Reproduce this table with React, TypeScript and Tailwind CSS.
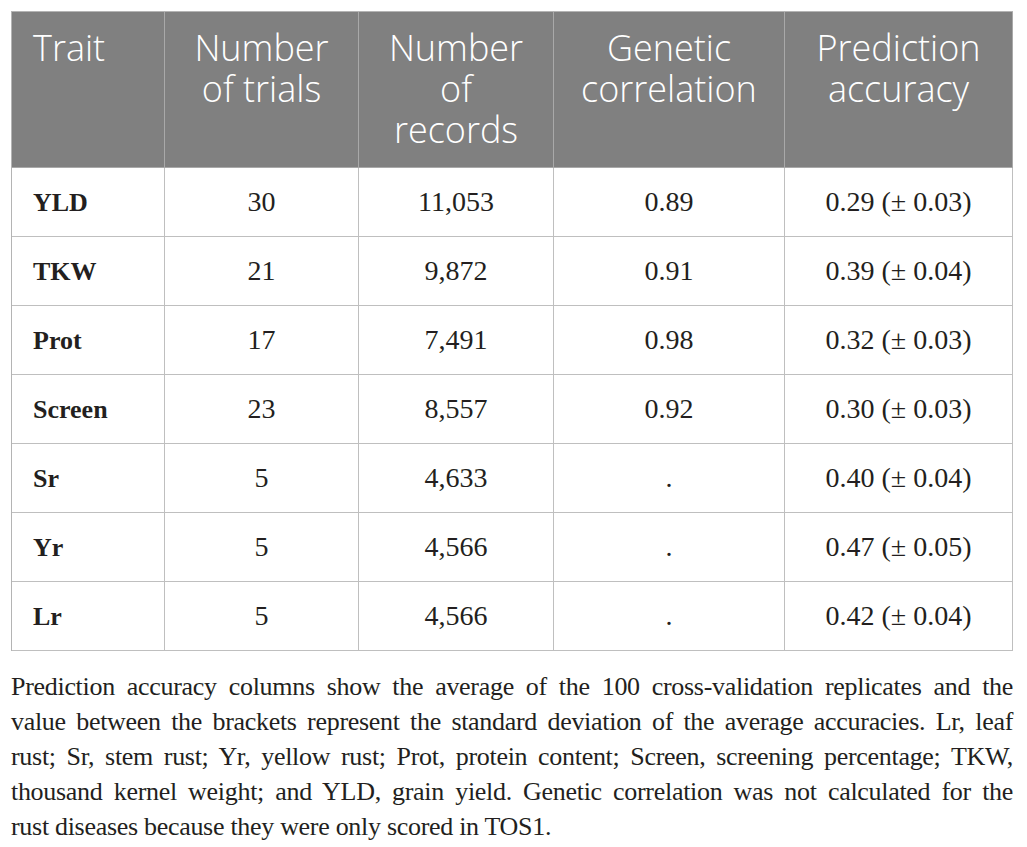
const HEAD = [
  { label: ["Trait"], align: "left" },
  { label: ["Number", "of trials"], align: "center" },
  { label: ["Number", "of", "records"], align: "center" },
  { label: ["Genetic", "correlation"], align: "center" },
  { label: ["Prediction", "accuracy"], align: "center" },
];

const ROWS = [
  ["YLD", "30", "11,053", "0.89", "0.29", "0.03"],
  ["TKW", "21", "9,872", "0.91", "0.39", "0.04"],
  ["Prot", "17", "7,491", "0.98", "0.32", "0.03"],
  ["Screen", "23", "8,557", "0.92", "0.30", "0.03"],
  ["Sr", "5", "4,633", ".", "0.40", "0.04"],
  ["Yr", "5", "4,566", ".", "0.47", "0.05"],
  ["Lr", "5", "4,566", ".", "0.42", "0.04"],
];

const CAPTION = [
  "Prediction accuracy columns show the average of the 100 cross-validation replicates and the",
  "value between the brackets represent the standard deviation of the average accuracies. Lr, leaf",
  "rust; Sr, stem rust; Yr, yellow rust; Prot, protein content; Screen, screening percentage; TKW,",
  "thousand kernel weight; and YLD, grain yield. Genetic correlation was not calculated for the",
  "rust diseases because they were only scored in TOS1.",
];

const COLS = "grid grid-cols-[153px_194px_195px_231px_228px]";

export default function App() {
  return (
    <div className="min-h-screen bg-white pl-[11px] pt-[11px] w-[1027px]">
      {/* Table */}
      <div className="w-[1002px] border-l border-t border-[#b4b4b4]">
        {/* Header */}
        <div className={COLS}>
          {HEAD.map((h, i) => (
            <div
              key={i}
              className={
                "h-[156px] bg-[#808080] border-b border-r border-[#a9a9a9] pt-[15px] text-white text-[36px] leading-[41px] font-[350] font-['Open_Sans',sans-serif] " +
                (h.align === "left" ? "pl-[21px] text-left" : "text-center")
              }
            >
              {h.label.map((l) => (
                <div key={l}>{l}</div>
              ))}
            </div>
          ))}
        </div>

        {/* Body */}
        {ROWS.map((r) => (
          <div key={r[0]} className={COLS + " font-['Liberation_Serif',serif] text-[28px] text-[#231f20]"}>
            <div className="h-[69px] flex items-center pl-[21px] text-[26px] font-bold border-b border-r border-[#bfbfbf]">
              {r[0]}
            </div>
            <div className="h-[69px] flex items-center justify-center border-b border-r border-[#bfbfbf]">
              {r[1]}
            </div>
            <div className="h-[69px] flex items-center justify-center border-b border-r border-[#bfbfbf]">
              {r[2]}
            </div>
            <div className="h-[69px] flex items-center justify-center border-b border-r border-[#bfbfbf]">
              {r[3]}
            </div>
            <div className="h-[69px] flex items-center justify-center whitespace-pre border-b border-r border-[#bfbfbf]">
              {`${r[4]} (± ${r[5]})`}
            </div>
          </div>
        ))}
      </div>

      {/* Caption */}
      <div className="w-[1002px] mt-[18px] font-['Liberation_Serif',serif] text-[26px] tracking-[-0.3px] leading-[35px] text-[#231f20]">
        {CAPTION.map((line, i) => (
          <div
            key={i}
            className={i < CAPTION.length - 1 ? "text-justify [text-align-last:justify]" : "text-left"}
          >
            {line}
          </div>
        ))}
      </div>
    </div>
  );
}
